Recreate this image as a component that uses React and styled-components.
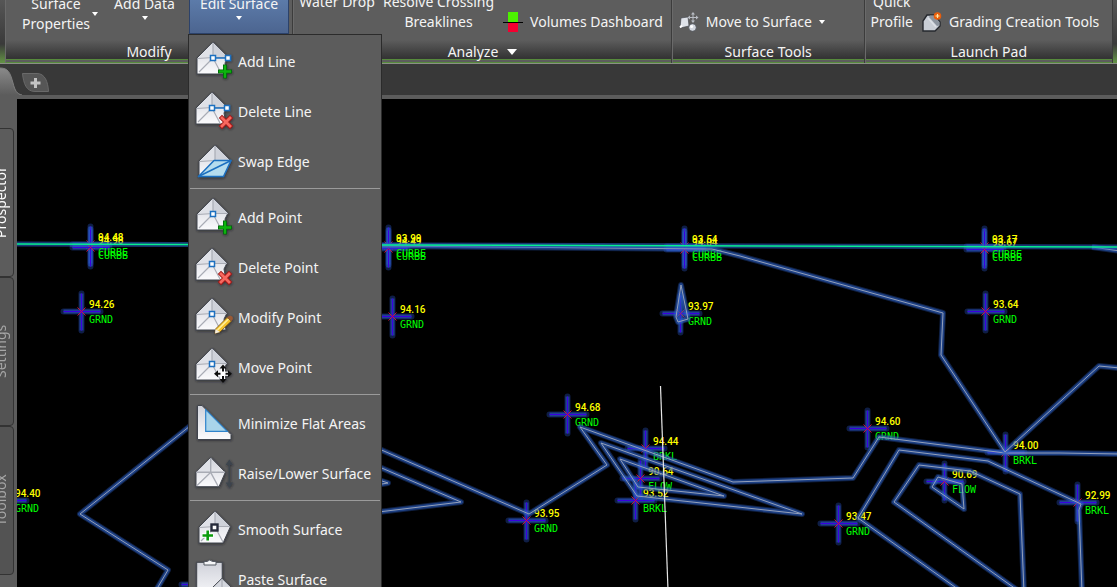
import React from "react";
import styled, { createGlobalStyle, css } from "styled-components";

const GlobalStyle = createGlobalStyle`
  * {
    box-sizing: border-box;
  }

  body {
    margin: 0;
    overflow: hidden;
    background: #000;
    color: #f4f4f4;
    font-family: "Noto Sans", "Open Sans", sans-serif;
    font-size: 14px;
    line-height: 20px;
  }

  button {
    margin: 0;
    padding: 0;
    border: 0;
    background: none;
    color: inherit;
    font: inherit;
    white-space: nowrap;
  }

  svg {
    display: block;
    flex: none;
  }
`;

/* ---------- small drawings ---------- */

const Caret = ({ size = 6 }) => (
  <svg width={size} height={size / 2 + 1} viewBox="0 0 6 4" preserveAspectRatio="none" aria-hidden="true">
    <path d="M0 0H6L3 4Z" fill="#fff" />
  </svg>
);

const VolumesIcon = () => (
  <svg width="20" height="20" viewBox="0 0 20 20" aria-hidden="true">
    <rect x="5" y="0" width="10" height="10" fill="#4cf000" />
    <rect x="5" y="11" width="10" height="9" fill="#f40030" />
    <rect x="0" y="10" width="20" height="1" fill="#000" />
  </svg>
);

const MoveSurfaceIcon = () => (
  <svg width="20" height="20" viewBox="0 0 20 20" aria-hidden="true">
    <path d="M2 6L9 5L10 14L1 16Z" fill="#dfe3ea" stroke="#3c4048" strokeWidth=".6" />
    <path d="M1 15.500L3 13.500" stroke="#fff" strokeWidth="2" />
    <circle cx="13.500" cy="15.500" r="3.800" fill="#d3d7de" stroke="#44484f" strokeWidth=".7" />
    <circle cx="12.600" cy="14.500" r="1.500" fill="#fff" />
    <path d="M14 0L16 2.500H12ZM14 11L16 8.500H12ZM8.500 5.500L11 3.500V7.500ZM19.500 5.500L17 3.500V7.500Z" fill="#b9bdc4" />
    <path d="M14 2V9M10.500 5.500H17.500" stroke="#b9bdc4" />
  </svg>
);

const GradingIcon = () => (
  <svg width="20" height="20" viewBox="0 0 20 20" aria-hidden="true">
    <path d="M1 19V9L5 3H12L18 10V14L13 19Z" fill="#c9ced6" stroke="#25282e" strokeWidth="1.400" />
    <path d="M8 3.500H12L17.500 10V13.500L15 14L7 5Z" fill="#8d95a0" />
    <path d="M6 6L14 15" stroke="#dde1e7" strokeWidth="1.500" />
    <circle cx="15.500" cy="4" r="3.800" fill="#e85d0c" />
    <path d="M15.500 2V6M13.500 4H17.500" stroke="#ffe9a8" strokeWidth="1.200" />
  </svg>
);

const Plus = ({ x, y, r = 6 }) => (
  <g fill="none" strokeLinecap="square">
    <path d={`M${x - r} ${y}H${x + r}M${x} ${y - r}V${y + r}`} stroke="#05600a" strokeWidth="4" />
    <path d={`M${x - r} ${y}H${x + r}M${x} ${y - r}V${y + r}`} stroke="#08b408" strokeWidth="2.400" />
  </g>
);

const Cross = ({ x, y }) => (
  <g fill="none" strokeLinecap="square">
    <path d={`M${x - 4} ${y - 4}L${x + 4} ${y + 4}M${x + 4} ${y - 4}L${x - 4} ${y + 4}`} stroke="#a11a18" strokeWidth="4.600" />
    <path d={`M${x - 4} ${y - 4}L${x + 4} ${y + 4}M${x + 4} ${y - 4}L${x - 4} ${y + 4}`} stroke="#f8685e" strokeWidth="2.800" />
  </g>
);

const Node = ({ x, y }) => (
  <rect x={x - 2.5} y={y - 2.5} width="5" height="5" fill="#fff" stroke="#1b6fc0" strokeWidth="1.500" />
);

const Mesh = ({ x = 0, y = 0, closed }) => (
  <g transform={`translate(${x} ${y})`} strokeLinejoin="round">
    <path
      d={closed ? "M18 2L33.500 17.500L26 34H2V18Z" : "M18 2L33 17L30 23L32 34H2V18Z"}
      fill="url(#paper)"
      stroke="#41454d"
      strokeWidth="1"
    />
    <path d="M18 2.500V17.500L2.500 18.500Z" fill="#dfe1e7" />
    <path d="M18 2.500V17.500L33 17.500Z" fill="#cfd2da" />
    <path d="M18 3V18M3 18.500L18 17.500L33 17.500M4 32L18 18L26 33" fill="none" stroke="#a9acb5" strokeWidth="1.200" />
  </g>
);

const icons = {
  addLine: (
    <>
      <Mesh />
      <path d="M18 18H33" stroke="#1b6fc0" strokeWidth="1.500" />
      <Node x={18} y={18} />
      <Node x={33} y={18} />
      <Plus x={30} y={31.5} r={5} />
    </>
  ),
  deleteLine: (
    <>
      <Mesh x={-1} />
      <path d="M17 18H32" stroke="#1b6fc0" strokeWidth="1.500" />
      <Node x={17} y={18} />
      <Node x={32} y={18} />
      <Cross x={31} y={32} />
    </>
  ),
  swapEdge: (
    <>
      <Mesh x={2} y={3} closed />
      <path d="M3.500 36.500L19 20.500H36L28.500 36.500Z" fill="#b5dcee" stroke="#1b6fc0" strokeWidth="1.500" strokeLinejoin="round" />
      <path d="M3.500 36.500L36 20.500" stroke="#1b6fc0" strokeWidth="1.500" />
    </>
  ),
  addPoint: (
    <>
      <Mesh />
      <Node x={18} y={18} />
      <Plus x={30} y={31.5} r={5} />
    </>
  ),
  deletePoint: (
    <>
      <Mesh x={-1} />
      <Node x={17} y={18} />
      <Cross x={30} y={32} />
    </>
  ),
  modifyPoint: (
    <>
      <Mesh x={-1} />
      <Node x={17} y={18} />
      <path d="M20 37.500L20.500 33L32 21.500L36.500 25L25 36Z" fill="#f6c22c" stroke="#6b4a14" strokeWidth=".8" />
      <path d="M22.500 34L33.500 23" stroke="#ffef9c" strokeWidth="1.600" />
      <path d="M32 21.500Q35 18.500 37 20.500T36.500 25Z" fill="#9a5a34" />
      <path d="M20 37.500L20.500 33L25 36Z" fill="#f2ecdf" />
    </>
  ),
  movePoint: (
    <>
      <Mesh x={-1} />
      <Node x={17} y={18} />
      <path d="M28 22V33M22 27.700H34" stroke="#fff" strokeWidth="4" />
      <path d="M28 18.500L31.500 22.500H24.500ZM28 37L31.500 33H24.500ZM19 27.700L23 24.200V31.200ZM37 27.700L33 24.200V31.200Z" fill="#111" />
      <path d="M28 21V25.500M28 30V34.500M21 27.700H25.500M30.500 27.700H35" stroke="#111" strokeWidth="2" />
    </>
  ),
  minimize: (
    <>
      <path d="M2.500 3.500H7L36 32.500V37.500H2.500Z" fill="url(#paper)" stroke="#41454d" strokeWidth="1" />
      <path d="M10.700 7.700V29.300H32.300Z" fill="#a9d4ea" stroke="#2d83cb" strokeWidth="1.200" />
    </>
  ),
  raise: (
    <>
      <path d="M15.700 5.300L30.300 20.300L24 34.700H1V20.300Z" fill="url(#paper)" stroke="#41454d" />
      <path d="M15.700 6V20.300L1.500 20.300Z" fill="#dfe1e7" />
      <path d="M15.700 6V20.300M1.500 20.300H30M2 33.500L15.700 20.300L23 34" fill="none" stroke="#a9acb5" strokeWidth="1.400" />
      <path d="M34.300 7.500L38 13H30.600ZM34.300 36L38 30.500H30.600Z" fill="#3c444e" />
      <path d="M34.300 11V33" stroke="#3c444e" strokeWidth="1.600" />
    </>
  ),
  smooth: (
    <>
      <Mesh x={2} y={1} closed />
      <rect x="16.500" y="16.500" width="6" height="6" fill="#fff" stroke="#262c3a" strokeWidth="2.400" />
      <path d="M7 27.500H18.500M12.700 22V33" stroke="#fff" strokeWidth="4.500" />
      <path d="M7.500 27.500H18M12.700 22.500V32.500" stroke="#0a9c0a" strokeWidth="2.600" />
    </>
  ),
  paste: (
    <>
      <rect x="1.700" y="4.300" width="25.500" height="36" fill="url(#paper)" stroke="#41454d" />
      <path d="M9 7V3.500H12Q14.700 .5 17.500 3.500H21V7Z" fill="#f4f5f7" stroke="#555a63" />
      <path d="M27 20.300L37 30V40H17V30Z" fill="#d3d6dd" stroke="#41454d" />
      <path d="M27 21V30M18 30H36" stroke="#a0a3ac" />
    </>
  ),
};

const MenuIcon = ({ name }) => (
  <svg width="38" height="38" viewBox="0 0 38 38" overflow="visible" aria-hidden="true">
    <g filter="url(#shade)">{icons[name]}</g>
  </svg>
);

const SharedDefs = () => (
  <HiddenSvg aria-hidden="true">
    <defs>
      <linearGradient id="paper" x1="0" y1="0" x2="0" y2="1">
        <stop offset="0" stopColor="#d0d2da" />
        <stop offset="1" stopColor="#fbfbfd" />
      </linearGradient>
      <filter id="shade" x="-20%" y="-20%" width="140%" height="140%">
        <feDropShadow dx="0.500" dy="0.800" stdDeviation="0.900" floodColor="#1c1e24" floodOpacity=".7" />
      </filter>
    </defs>
  </HiddenSvg>
);

/* ---------- edit surface menu ---------- */

const menuGroups = [
  [
    { icon: "addLine", label: "Add Line" },
    { icon: "deleteLine", label: "Delete Line" },
    { icon: "swapEdge", label: "Swap Edge" },
  ],
  [
    { icon: "addPoint", label: "Add Point" },
    { icon: "deletePoint", label: "Delete Point" },
    { icon: "modifyPoint", label: "Modify Point" },
    { icon: "movePoint", label: "Move Point" },
  ],
  [
    { icon: "minimize", label: "Minimize Flat Areas" },
    { icon: "raise", label: "Raise/Lower Surface" },
  ],
  [
    { icon: "smooth", label: "Smooth Surface" },
    { icon: "paste", label: "Paste Surface" },
  ],
];

function EditSurfaceMenu() {
  return (
    <Menu role="menu">
      {menuGroups.map((group) => (
        <MenuGroup key={group[0].label}>
          {group.map(({ icon, label }) => (
            <MenuItem key={label} role="menuitem">
              <MenuIcon name={icon} />
              {label}
            </MenuItem>
          ))}
        </MenuGroup>
      ))}
    </Menu>
  );
}

/* ---------- ribbon ---------- */

function Ribbon() {
  return (
    <RibbonBar>
      <Panel $grow={288}>
        <PanelBody>
          <SplitTool>
            <TallTool>
              Surface
              <br />
              Properties
            </TallTool>
            <Caret />
          </SplitTool>
          <StackTool>
            Add Data
            <Caret />
          </StackTool>
          <MenuAnchor>
            <StackTool $active aria-haspopup="menu" aria-expanded="true">
              Edit Surface
              <Caret />
            </StackTool>
            <EditSurfaceMenu />
          </MenuAnchor>
        </PanelBody>
        <PanelTitle>Modify</PanelTitle>
      </Panel>
      <Panel $grow={379}>
        <PanelBody>
          <TallTool $top>Water Drop</TallTool>
          <TallTool>
            Resolve Crossing
            <br />
            Breaklines
          </TallTool>
          <RowTool>
            <VolumesIcon />
            Volumes Dashboard
          </RowTool>
        </PanelBody>
        <PanelTitle>
          Analyze
          <Caret size={10} />
        </PanelTitle>
      </Panel>
      <Panel $grow={192}>
        <PanelBody>
          <RowTool>
            <MoveSurfaceIcon />
            Move to Surface
            <Caret />
          </RowTool>
        </PanelBody>
        <PanelTitle>Surface Tools</PanelTitle>
      </Panel>
      <Panel $grow={248}>
        <PanelBody>
          <TallTool>
            Quick
            <br />
            Profile
          </TallTool>
          <RowTool>
            <GradingIcon />
            Grading Creation Tools
          </RowTool>
        </PanelBody>
        <PanelTitle>Launch Pad</PanelTitle>
      </Panel>
    </RibbonBar>
  );
}

/* ---------- drawing ---------- */

const points = [
  { x: 90, y: 244, z: "94.48", code: "CURBE" },
  { x: 90, y: 247, z: "94.98", code: "CURBB" },
  { x: 388, y: 245, z: "93.99", code: "CURBE" },
  { x: 388, y: 248, z: "94.49", code: "CURBB" },
  { x: 684, y: 246, z: "93.54", code: "CURBE" },
  { x: 684, y: 249, z: "94.04", code: "CURBB" },
  { x: 984, y: 246, z: "93.17", code: "CURBE" },
  { x: 984, y: 249, z: "93.67", code: "CURBB" },
  { x: 81, y: 311, z: "94.26", code: "GRND" },
  { x: 392, y: 316, z: "94.16", code: "GRND" },
  { x: 680, y: 313, z: "93.97", code: "GRND" },
  { x: 985, y: 311, z: "93.64", code: "GRND" },
  { x: 567, y: 414, z: "94.68", code: "GRND" },
  { x: 526, y: 520, z: "93.95", code: "GRND" },
  { x: 645, y: 448, z: "94.44", code: "BRKL" },
  { x: 640, y: 478, z: "90.64", code: "FLOW" },
  { x: 635, y: 500, z: "93.52", code: "BRKL" },
  { x: 867, y: 428, z: "94.60", code: "GRND" },
  { x: 838, y: 523, z: "93.47", code: "GRND" },
  { x: 944, y: 481, z: "90.69", code: "FLOW" },
  { x: 1005, y: 452, z: "94.00", code: "BRKL" },
  { x: 1077, y: 502, z: "92.99", code: "BRKL" },
  { x: 7, y: 500, z: "94.40", code: "GRND" },
  { x: 199, y: 584, z: "94.12", code: "GRND" },
];

const breaklines = [
  "M200 418L80 514L168 570L155 592",
  "M370 445L529 514L607 465L580 427L733 482L853 478L879 437L1005 453H1060L1120 454",
  "M370 463L461 502L370 513",
  "M370 477L388 483L370 486",
  "M601 443L802 514L637 496Z",
  "M620 459L724 496L638 487Z",
  "M382 246L712 249L740 256L943 313L941 355L1005 452L1099 366L1120 368",
  "M1092 247L1120 251",
  "M962 592L858 518L899 450L988 461L1081 504L1079 510L1082 592",
  "M1020 592L894 502L919 465L970 471L1020 494L1024 592",
  "M938 477L962 484L964 509L932 487Z",
  "M681 285L688 319L678 322L676 317Z",
];

const curbLine = "M10 244L1120 247";

function SurveyPoint({ x, y }) {
  const cross = `M${x - 18} ${y}H${x + 19}M${x} ${y - 18}V${y + 19}`;
  return (
    <g fill="none" transform="translate(.5 .5)">
      <path d={cross} stroke="#2a55c8" strokeOpacity=".35" strokeWidth="6" strokeLinecap="round" />
      <path d={cross} stroke="#2a55c8" strokeOpacity=".6" strokeWidth="4" />
      <path d={cross} stroke="#3a00e0" />
      <path
        d={`M${x - 4} ${y - 4}L${x + 4} ${y + 4}M${x + 4} ${y - 4}L${x - 4} ${y + 4}`}
        stroke="#e00c38"
        strokeOpacity=".9"
      />
    </g>
  );
}

function Drawing() {
  return (
    <Viewport>
      <svg width="100%" height="100%" role="img" aria-label="Survey surface">
        <g transform="translate(-17 -99)" fill="none" strokeLinejoin="round">
          {points.map((p) => (
            <SurveyPoint key={`${p.x}-${p.y}`} {...p} />
          ))}
          {points.map((p) => (
            <g key={`${p.x}-${p.y}`}>
              <Elevation x={p.x + 8} y={p.y - 3}>{p.z}</Elevation>
              <Code x={p.x + 8} y={p.y + 12}>{p.code}</Code>
            </g>
          ))}
          <path d="M681 287L686 319L679 321L677 317Z" fill="#2a5cc0" fillOpacity=".35" />
          {breaklines.map((d) => (
            <g key={d}>
              <path d={d} stroke="#2a5cc0" strokeOpacity=".35" strokeWidth="6" />
              <path d={d} stroke="#2d62c8" strokeOpacity=".5" strokeWidth="4" />
              <path d={d} stroke="#94a0ba" strokeWidth="1" />
            </g>
          ))}
          <path d={curbLine} stroke="#2a5cc0" strokeOpacity=".6" strokeWidth="5" />
          <path d={curbLine} stroke="#06f090" strokeWidth="1.500" />
          <path d="M660.500 386L668 590" stroke="#e6e6e6" strokeWidth="1.200" />
        </g>
      </svg>
    </Viewport>
  );
}

/* ---------- page ---------- */

const paletteTabs = ["Prospector", "Settings", "Toolbox"];

export default function App() {
  return (
    <>
      <GlobalStyle />
      <SharedDefs />
      <Window>
        <Ribbon />
        <FileTabs>
          <svg width="22" height="31" viewBox="0 0 22 31" aria-hidden="true">
            <path d="M0 4C8 4 10 8 13 19C15 27 17 30 22 31H0Z" fill="url(#fileTab)" />
            <path d="M0 4C8 4 10 8 13 19C15 27 17 30 22 31" fill="none" stroke="#808080" />
            <defs>
              <linearGradient id="fileTab" x1="0" y1="0" x2="0" y2="1">
                <stop offset="0" stopColor="#8a8a8a" />
                <stop offset="1" stopColor="#5c5c5c" />
              </linearGradient>
            </defs>
          </svg>
          <NewTab aria-label="New drawing">
            <svg width="27" height="19" viewBox="0 0 27 19" aria-hidden="true">
              <path d="M.5 .5H15C23 .5 26 9 26.500 18.500H13C4 18.500 1.500 10 .5 .5Z" fill="#565656" stroke="#6a6a6a" />
              <path d="M13.500 5V15M8.500 10H18.500" stroke="#c4c4c4" strokeWidth="3" />
            </svg>
          </NewTab>
        </FileTabs>
        <Workspace>
          <Palette role="tablist">
            {paletteTabs.map((name, i) => (
              <PaletteTab key={name} role="tab" $active={i === 0} aria-selected={i === 0}>
                {name}
              </PaletteTab>
            ))}
          </Palette>
          <Drawing />
        </Workspace>
      </Window>
    </>
  );
}

const HiddenSvg = styled.svg`
  position: absolute;
  width: 0;
  height: 0;
`;

const Window = styled.div`
  display: flex;
  flex-direction: column;
  height: 100vh;
  overflow: hidden;
  background: #383838;
`;

const RibbonBar = styled.header`
  display: flex;
  height: 64px;
  padding: 0 4px 0 5px;
  background: linear-gradient(#565656 0, #3a3a3a 44px, #629045 62px);
  border-bottom: 1px solid #8a8f86;
`;

const Panel = styled.section`
  display: flex;
  flex-direction: column;
  justify-content: flex-end;
  flex: ${({ $grow }) => $grow} 1 0;
  min-width: 0;
  background: #5d5d5d;
  border-right: 1px solid #3c3c3c;
  border-left: 1px solid #6a6a6a;
`;

const PanelBody = styled.div`
  display: flex;
  align-items: flex-end;
  height: 34px;
  padding: 0 1px;
`;

const PanelTitle = styled.h2`
  display: flex;
  align-items: center;
  justify-content: center;
  gap: 9px;
  height: 29px;
  margin: 0;
  padding-top: 11px;
  background: linear-gradient(#5d5d5d 6px, #343434 24px);
  border-bottom: 4px double #568a3c;
  font-size: 14px;
  font-weight: 400;
  line-height: 20px;
`;

const TallTool = styled.button`
  align-self: flex-end;
  margin-bottom: ${({ $top }) => ($top ? 20 : 0)}px;
  padding: 0 4px 2px;
  text-align: center;
`;

const SplitTool = styled.div`
  display: flex;
  align-items: center;
  padding: 0 2px 0 11px;

  ${TallTool} {
    padding: 0 2px 0 4px;
  }
`;

const StackTool = styled.button`
  display: flex;
  flex-direction: column;
  align-items: center;
  flex: none;
  gap: 2px;
  width: 89px;
  padding-bottom: 14px;

  ${({ $active }) =>
    $active &&
    css`
      width: 100px;
      background: linear-gradient(#5f7fae, #4c6590);
      border: 1px solid #2c426a;
      border-top: 0;
      padding-bottom: 13px;
    `}
`;

const RowTool = styled.button`
  display: flex;
  align-items: center;
  gap: 7px;
  padding: 0 2px 2px 5px;
`;

const MenuAnchor = styled.div`
  position: relative;
`;

const Menu = styled.div`
  position: absolute;
  top: 100%;
  left: -1px;
  z-index: 2;
  width: 194px;
  padding-top: 2px;
  background: #5c5c5c;
  border: 1px solid #2b2b2b;
`;

const MenuGroup = styled.div`
  & + & {
    margin: 1px 1px 0;
    padding-top: 4px;
    border-top: 1px solid #9b9b9b;
  }
`;

const MenuItem = styled.button`
  display: flex;
  align-items: center;
  gap: 5px;
  width: 100%;
  height: 50px;
  padding-left: 6px;
  text-align: left;

  svg {
    margin-bottom: 6px;
  }

  ${MenuGroup} + ${MenuGroup} & {
    padding-left: 5px;
  }
`;

const FileTabs = styled.nav`
  display: flex;
  height: 35px;
  background: #383838;
  border-bottom: 4px solid #5c5c5c;
`;

const NewTab = styled.button`
  display: flex;
  align-items: center;
  height: 31px;
  padding-top: 6px;
`;

const Workspace = styled.main`
  display: flex;
  flex: 1;
  min-height: 0;
`;

const Palette = styled.div`
  display: flex;
  flex-direction: column;
  align-items: flex-end;
  width: 17px;
  padding: 29px 3px 0 0;
  overflow: hidden;
  background: #5c5c5c;
`;

const PaletteTab = styled.button`
  display: flex;
  align-items: center;
  justify-content: center;
  flex: none;
  width: 26px;
  height: 149px;
  border: 1px solid #333;
  border-radius: 4px;
  background: ${({ $active }) => ($active ? "#5c5c5c" : "#535353")};
  color: ${({ $active }) => ($active ? "#fff" : "#a6a6a6")};
  writing-mode: vertical-rl;
  transform: rotate(180deg);
`;

const Viewport = styled.section`
  flex: 1;
  min-width: 0;
  background: #000;
  overflow: hidden;
`;

const Elevation = styled.text`
  fill: #ffff00;
  font: 500 10px Roboto, sans-serif;
`;

const Code = styled.text`
  fill: #00ff00;
  font: 400 10px "DejaVu Sans Mono", monospace;
`;
